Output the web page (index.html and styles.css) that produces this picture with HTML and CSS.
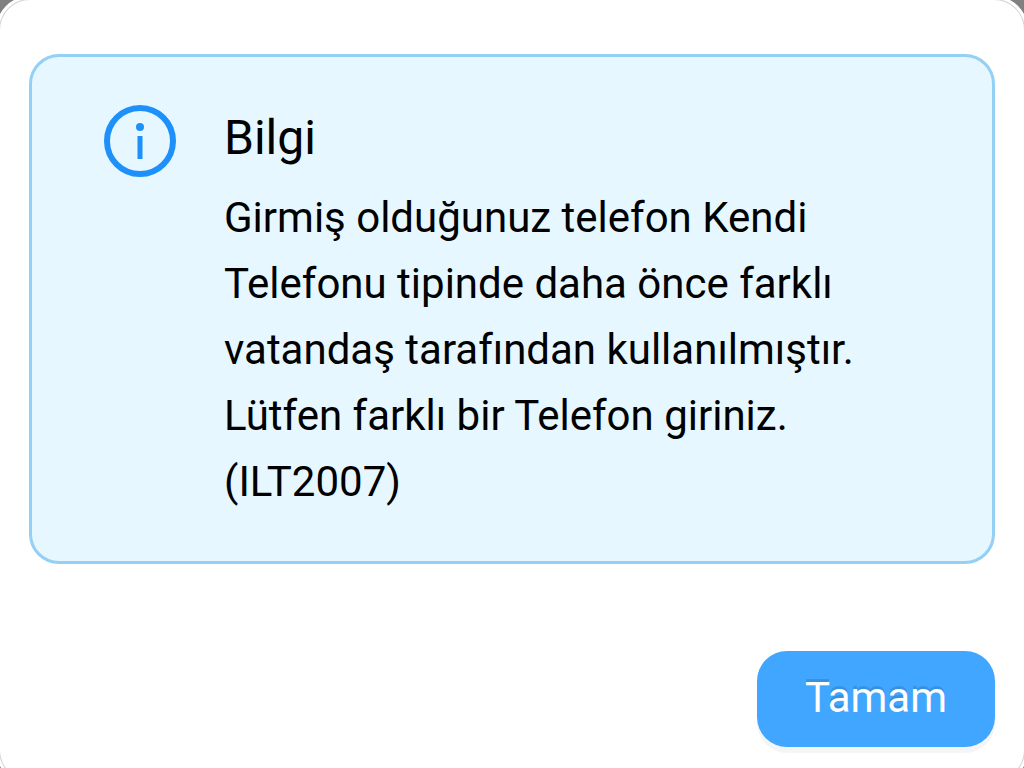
FILE: index.html
```html
<!DOCTYPE html>
<html lang="tr">
<head>
<meta charset="utf-8">
<meta name="viewport" content="width=device-width, initial-scale=1">
<title>Bilgi</title>
<link rel="stylesheet" href="styles.css">
</head>
<body>
<main class="modal" role="dialog" aria-labelledby="alert-title">
  <section class="alert">
    <svg class="alert-icon" viewBox="0 0 72 72" aria-hidden="true">
      <circle cx="36" cy="36" r="33" fill="none" stroke="currentColor" stroke-width="6"/>
      <circle cx="36" cy="22" r="4" fill="currentColor"/>
      <rect x="33.5" y="31" width="5" height="23" fill="currentColor"/>
    </svg>
    <div class="alert-body">
      <h1 class="alert-title" id="alert-title">Bilgi</h1>
      <p class="alert-text">Girmiş olduğunuz telefon Kendi Telefonu tipinde daha önce farklı vatandaş tarafından kullanılmıştır. Lütfen farklı bir Telefon giriniz. (ILT2007)</p>
    </div>
  </section>
  <footer class="modal-footer">
    <button class="confirm" type="button">Tamam</button>
  </footer>
</main>
</body>
</html>
```
FILE: styles.css
```css
* { box-sizing: border-box; }

body {
  margin: 0;
  height: 100vh;
  overflow: hidden;
  background: #808080;
  font-family: Roboto, sans-serif;
  color: #000;
}

.modal {
  min-height: calc(100vh + 12px);
  display: flex;
  flex-direction: column;
  justify-content: space-between;
  padding: 54px 29px 33px;
  background: #fff;
  border-radius: 30px;
  box-shadow: 0 0 0 1px #d4d4d4, 0 0 0 4px #fff;
}

.alert {
  display: flex;
  align-items: flex-start;
  gap: 48px;
  padding: 42px 72px 46px;
  background: #e6f7ff;
  border: 3px solid #94d0f3;
  border-radius: 30px;
}

.alert-icon {
  flex: none;
  width: 72px;
  height: 72px;
  margin-top: 6px;
  color: #1e90fa;
}

.alert-body { flex: 1; }

.alert-title {
  margin: 0 0 8px;
  font-size: 48px;
  line-height: 78px;
  font-weight: 400;
}

.alert-text {
  margin: 0;
  font-size: 42px;
  line-height: 66px;
}

.modal-footer {
  display: flex;
  justify-content: flex-end;
}

.confirm {
  height: 96px;
  padding: 0 48px 2px;
  border: 0;
  border-radius: 30px;
  background: #40a6ff;
  color: #fff;
  font: 400 42px/66px Roboto, sans-serif;
  text-shadow: 0 -3px 0 rgba(0, 0, 0, 0.12);
  box-shadow: 0 6px 0 rgba(0, 0, 0, 0.04);
}
```
